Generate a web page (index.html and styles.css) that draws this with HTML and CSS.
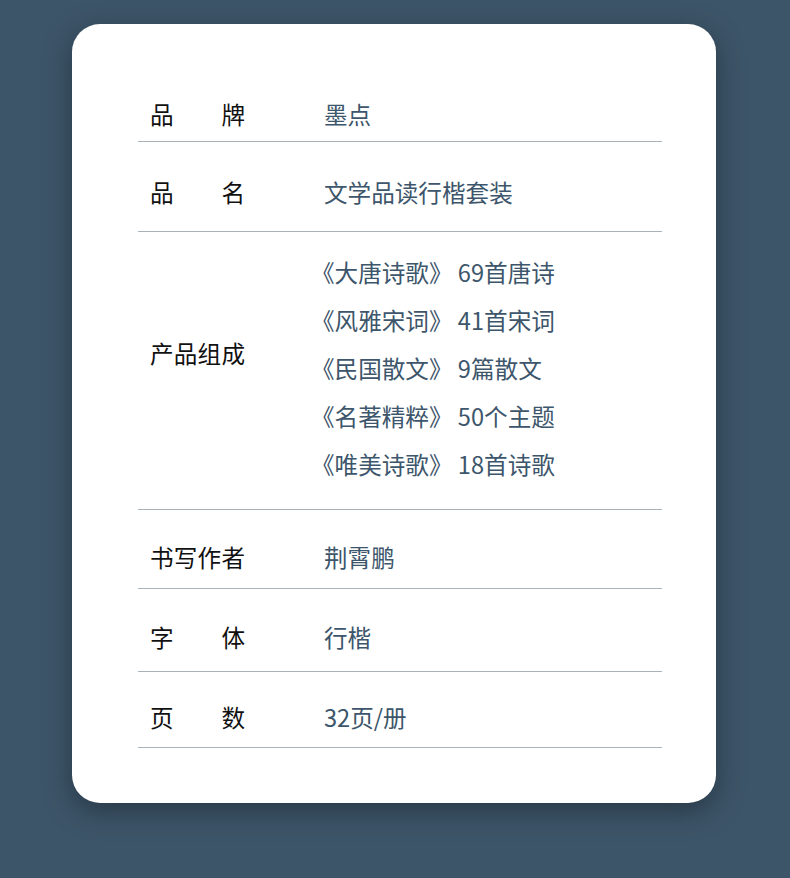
FILE: index.html
```html
<!DOCTYPE html>
<html lang="zh-CN">
<head>
    <meta charset="UTF-8">
    <meta name="viewport" content="width=device-width, initial-scale=1.0">
    <title>产品参数</title>
    <link rel="stylesheet" href="styles.css">
</head>
<body>
    <div class="card">
        <div class="specs">
            <div class="row row-brand">
                <div class="label">品牌</div>
                <div class="value">墨点</div>
            </div>
            <div class="row row-name">
                <div class="label">品名</div>
                <div class="value">文学品读行楷套装</div>
            </div>
            <div class="row row-set">
                <div class="label">产品组成</div>
                <div class="value value-list">
                    <div>《大唐诗歌》 69首唐诗</div>
                    <div>《风雅宋词》 41首宋词</div>
                    <div>《民国散文》 9篇散文</div>
                    <div>《名著精粹》 50个主题</div>
                    <div>《唯美诗歌》 18首诗歌</div>
                </div>
            </div>
            <div class="row row-author">
                <div class="label">书写作者</div>
                <div class="value">荆霄鹏</div>
            </div>
            <div class="row row-font">
                <div class="label">字体</div>
                <div class="value">行楷</div>
            </div>
            <div class="row row-pages">
                <div class="label">页数</div>
                <div class="value">32页/册</div>
            </div>
        </div>
    </div>
</body>
</html>
```

FILE: styles.css
```css
* {
    box-sizing: border-box;
    margin: 0;
    padding: 0;
}

body {
    background: #3d5568;
    font-family: "Noto Sans CJK SC", "Noto Sans", sans-serif;
    min-height: 100vh;
    padding: 24px 0 0 72px;
}

.card {
    width: 644px;
    height: 779px;
    background: #fff;
    border-radius: 28px;
    box-shadow: 0 8px 26px rgba(20, 30, 40, 0.5);
    padding: 66px 54px 0 66px;
}

.specs {
    width: 524px;
}

.row {
    display: flex;
    align-items: flex-start;
    border-bottom: 1px solid #a9b1b9;
    font-size: 23.6px;
    line-height: 48px;
}

/* 标签两端对齐，四字宽 */
.label {
    width: 95px;
    margin: 0 79px 0 12px;
    flex-shrink: 0;
    color: #111;
    text-align: justify;
    text-align-last: justify;
}

.value {
    color: #3d566b;
}

.value-list {
    margin-left: -13px;
}

.row-brand  { padding: 0 0 3px; }
.row-name   { padding: 26px 0 15px; }
.row-set    { padding: 16px 0 21px; align-items: center; }
.row-set .label { margin-bottom: 30px; }
.row-author { padding: 23px 0 7px; }
.row-font   { padding: 24px 0 10px; }
.row-pages  { padding: 21px 0 6px; }
```
